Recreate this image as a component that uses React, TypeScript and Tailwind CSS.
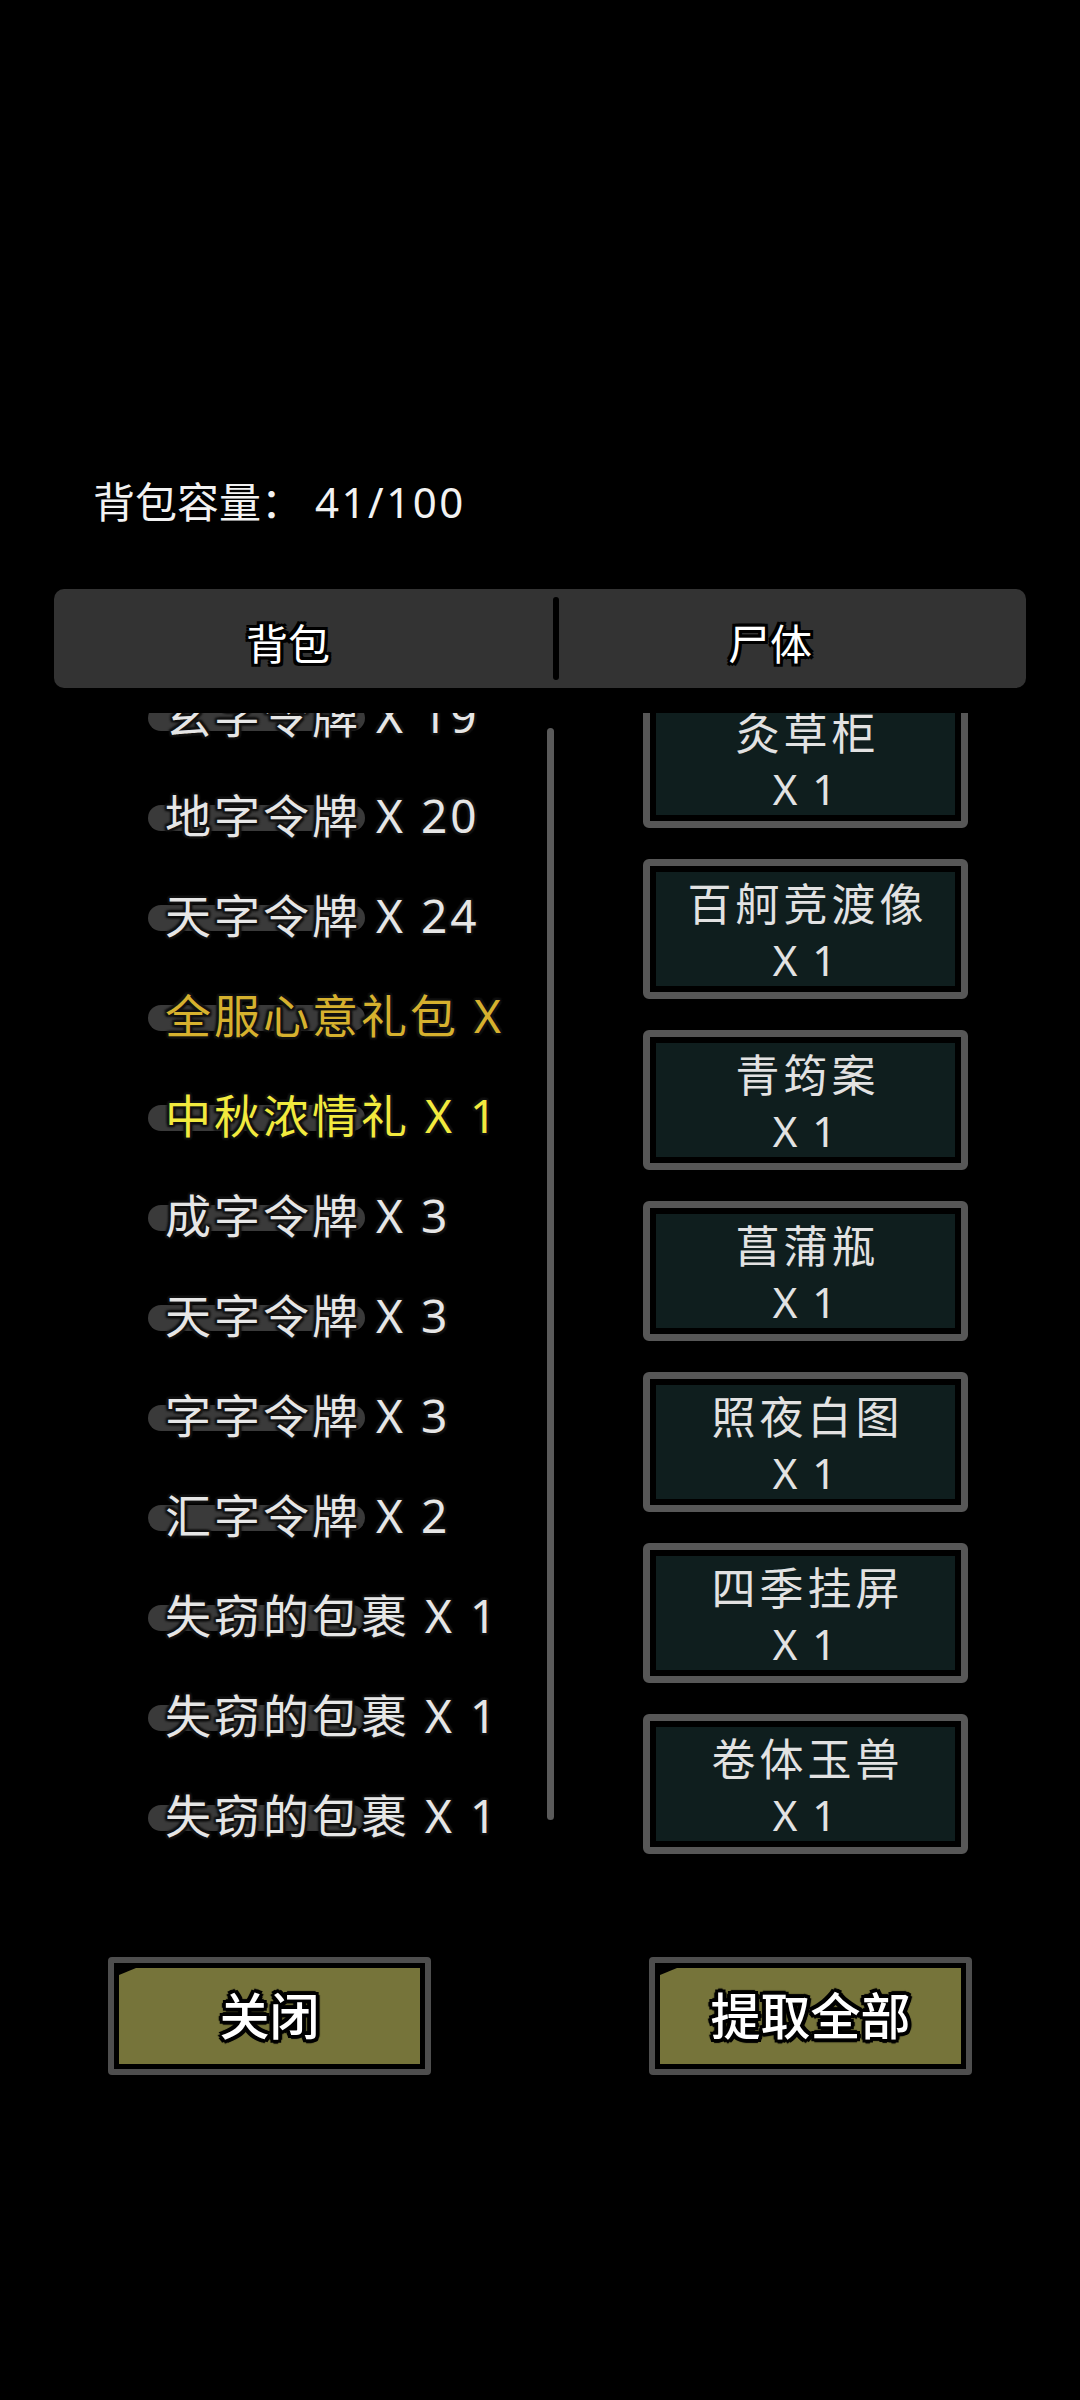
import React from "react";

const FONT = "[font-family:'Noto_Sans','Noto_Sans_CJK_SC',sans-serif]";

const listItems: { text: string; color: string }[] = [
  { text: "玄字令牌 X 19", color: "text-[#e6e6e6]" },
  { text: "地字令牌 X 20", color: "text-[#e6e6e6]" },
  { text: "天字令牌 X 24", color: "text-[#e6e6e6]" },
  { text: "全服心意礼包 X 1", color: "text-[#d6b12e]" },
  { text: "中秋浓情礼 X 1", color: "text-[#f2ea3e]" },
  { text: "成字令牌 X 3", color: "text-[#e6e6e6]" },
  { text: "天字令牌 X 3", color: "text-[#e6e6e6]" },
  { text: "字字令牌 X 3", color: "text-[#e6e6e6]" },
  { text: "汇字令牌 X 2", color: "text-[#e6e6e6]" },
  { text: "失窃的包裹 X 1", color: "text-[#e6e6e6]" },
  { text: "失窃的包裹 X 1", color: "text-[#e6e6e6]" },
  { text: "失窃的包裹 X 1", color: "text-[#e6e6e6]" },
];

const cards = ["灸草柜", "百舸竞渡像", "青筠案", "菖蒲瓶", "照夜白图", "四季挂屏", "卷体玉兽"];

function ListRow({ text, color }: { text: string; color: string }) {
  return (
    <div className="relative h-[100px] shrink-0">
      <div className="absolute left-[8px] top-[40px] h-[26px] w-[217px] rounded-full bg-[#3a3a3a]" />
      <div
        className={`relative pl-[25px] text-[46px] leading-[100px] tracking-[3px] whitespace-nowrap ${color} [text-shadow:2px_0_2px_#121212,-2px_0_2px_#121212,0_2px_2px_#121212,0_-2px_2px_#121212,2px_2px_2px_#121212,-2px_-2px_2px_#121212,2px_-2px_2px_#121212,-2px_2px_2px_#121212]`}
      >
        {text}
      </div>
    </div>
  );
}

function Card({ name }: { name: string }) {
  return (
    <div className="h-[140px] shrink-0 rounded-[6px] border-[7px] border-[#575757] bg-black p-[6px]">
      <div className="flex h-full flex-col items-center bg-[#0f1e1e] pt-[5px] text-[#e2e2e2]">
        <div className="text-[44px] leading-[55px] tracking-[4px] pl-[4px] whitespace-nowrap">{name}</div>
        <div className="text-[42px] leading-[55px] tracking-[2px] whitespace-nowrap">X 1</div>
      </div>
    </div>
  );
}

function Button({ label }: { label: string }) {
  return (
    <div className="h-[118px] w-[323px] rounded-[4px] border-[6px] border-[#4e4e4e] bg-black p-[5px]">
      <div className="flex h-full items-center justify-center bg-[#76743a] [clip-path:polygon(17px_0,100%_0,100%_100%,0_100%,0_7px)]">
        <span className="text-[50px] leading-none font-medium text-white [text-shadow:3px_0_0_#000,-3px_0_0_#000,0_3px_0_#000,0_-3px_0_#000,3px_3px_0_#000,-3px_-3px_0_#000,3px_-3px_0_#000,-3px_3px_0_#000,4px_0_1px_#000,-4px_0_1px_#000,0_4px_1px_#000,0_-4px_1px_#000]">
          {label}
        </span>
      </div>
    </div>
  );
}

export default function App() {
  const outline =
    "[text-shadow:3px_0_0_#000,-3px_0_0_#000,0_3px_0_#000,0_-3px_0_#000,3px_3px_0_#000,-3px_-3px_0_#000,3px_-3px_0_#000,-3px_3px_0_#000]";
  return (
    <div className={`h-[2400px] w-[1080px] overflow-hidden bg-black ${FONT}`}>
      {/* capacity */}
      <div className="pl-[93px] pt-[477px] text-[42px] leading-[49px] text-[#f2f2f2] whitespace-nowrap">
        背包容量：<span className="pl-[12px] tracking-[2.5px]">41/100</span>
      </div>

      {/* tabs */}
      <div className="mx-[54px] mt-[63px] flex h-[99px] items-center rounded-[10px] bg-[#333333]">
        <div className={`flex h-full w-[499px] items-center justify-center pr-[31px] pt-[11px] text-[42px] leading-[42px] text-white ${outline}`}>
          背包
        </div>
        <div className="h-[83px] w-[6px] rounded-full bg-black" />
        <div className={`flex h-full flex-1 items-center justify-center pr-[45px] pt-[11px] text-[42px] leading-[42px] text-white ${outline}`}>
          尸体
        </div>
      </div>

      {/* content */}
      <div className="mt-[25px] flex h-[1150px]">
        <div className="ml-[140px] h-full w-[376px] overflow-hidden">
          <div className="-mt-[48px] flex flex-col">
            {listItems.map((it, i) => (
              <ListRow key={i} text={it.text} color={it.color} />
            ))}
          </div>
        </div>
        <div className="ml-[31px] mt-[15px] h-[1092px] w-[7px] rounded-full bg-[#5a5a5a]" />
        <div className="ml-[89px] h-full w-[325px] overflow-hidden">
          <div className="-mt-[25px] flex flex-col gap-[31px]">
            {cards.map((c) => (
              <Card key={c} name={c} />
            ))}
          </div>
        </div>
      </div>

      {/* buttons */}
      <div className="mt-[94px] flex">
        <div className="ml-[108px]">
          <Button label="关闭" />
        </div>
        <div className="ml-[218px]">
          <Button label="提取全部" />
        </div>
      </div>
    </div>
  );
}
